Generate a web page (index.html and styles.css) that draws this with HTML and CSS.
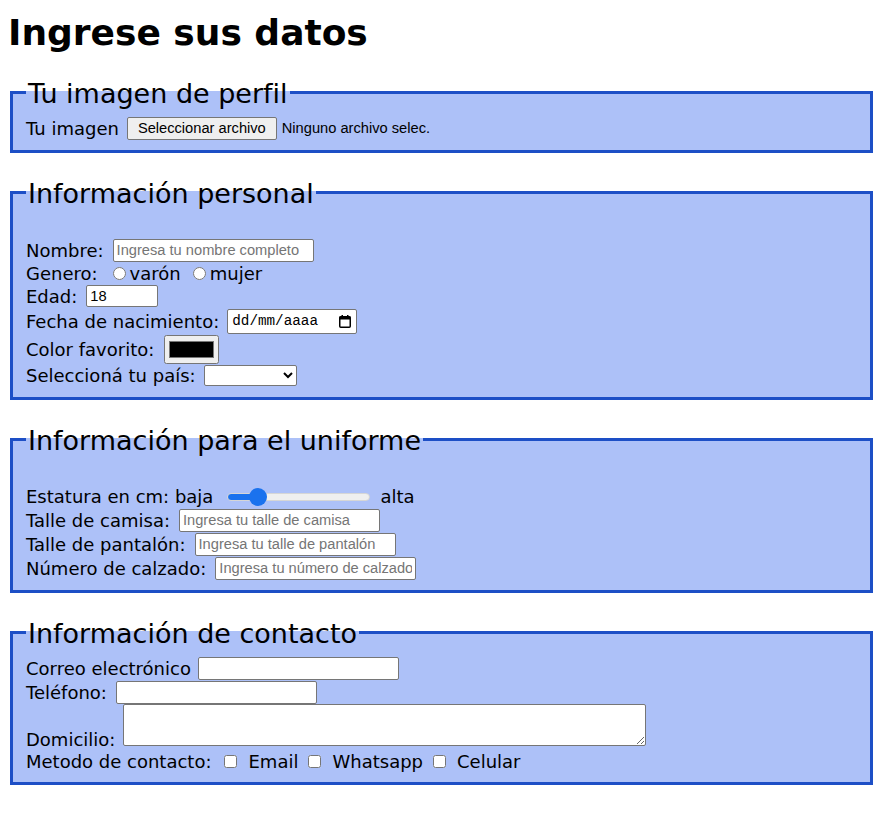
FILE: index.html
```html
<!DOCTYPE html>
<html lang="es">
<head>
<meta charset="utf-8">
<title>Ingrese sus datos</title>
<link rel="stylesheet" href="styles.css">
</head>
<body>
<h1 class="title">Ingrese sus datos</h1>
<form class="form">
  <fieldset class="group">
    <legend class="group-title">Tu imagen de perfil</legend>
    <div class="row">
      <span class="lbl">Tu imagen</span>
      <button type="button" class="file-btn gap-8">Seleccionar archivo</button>
      <span class="file-name">Ninguno archivo selec.</span>
    </div>
  </fieldset>

  <fieldset class="group">
    <legend class="group-title">Información personal</legend>
    <div class="group-body spaced">
      <div class="row">
        <label class="lbl" for="nombre">Nombre:</label>
        <input class="field gap-9" id="nombre" type="text" placeholder="Ingresa tu nombre completo">
      </div>
      <div class="row row--short">
        <span class="lbl">Genero:</span>
        <input class="radio radio--first" type="radio" name="genero" id="varon">
        <label class="opt" for="varon">varón</label>
        <input class="radio" type="radio" name="genero" id="mujer">
        <label class="opt" for="mujer">mujer</label>
      </div>
      <div class="row">
        <label class="lbl" for="edad">Edad:</label>
        <input class="field field--num gap-9" id="edad" type="number" value="18">
      </div>
      <div class="row row--date">
        <span class="lbl">Fecha de nacimiento:</span>
        <span class="date gap-8">
          <span class="date-text">dd/mm/aaaa</span>
          <svg class="date-icon" width="12" height="13" viewBox="0 0 12 13" aria-hidden="true">
            <rect x="0.75" y="1.75" width="10.5" height="10.5" rx="1" fill="none" stroke="#000" stroke-width="1.5"/>
            <rect x="0.5" y="1.5" width="11" height="3" fill="#000"/>
            <rect x="2.5" y="0" width="1.5" height="2" fill="#000"/>
            <rect x="8" y="0" width="1.5" height="2" fill="#000"/>
          </svg>
        </span>
      </div>
      <div class="row row--color">
        <label class="lbl" for="color">Color favorito:</label>
        <input class="color gap-10" id="color" type="color" value="#000000">
      </div>
      <div class="row row--select">
        <label class="lbl" for="pais">Seleccioná tu país:</label>
        <select class="select gap-8" id="pais"><option></option></select>
      </div>
    </div>
  </fieldset>

  <fieldset class="group">
    <legend class="group-title">Información para el uniforme</legend>
    <div class="group-body spaced">
      <div class="row row--range">
        <label class="lbl" for="estatura">Estatura en cm: baja</label>
        <input class="range" id="estatura" type="range" value="17">
        <span class="lbl">alta</span>
      </div>
      <div class="row">
        <label class="lbl" for="camisa">Talle de camisa:</label>
        <input class="field gap-9" id="camisa" type="text" placeholder="Ingresa tu talle de camisa">
      </div>
      <div class="row">
        <label class="lbl" for="pantalon">Talle de pantalón:</label>
        <input class="field gap-9" id="pantalon" type="text" placeholder="Ingresa tu talle de pantalón">
      </div>
      <div class="row">
        <label class="lbl" for="calzado">Número de calzado:</label>
        <input class="field gap-9" id="calzado" type="text" placeholder="Ingresa tu número de calzado">
      </div>
    </div>
  </fieldset>

  <fieldset class="group">
    <legend class="group-title">Información de contacto</legend>
    <div class="group-body">
      <div class="row">
        <label class="lbl" for="correo">Correo electrónico</label>
        <input class="field gap-7" id="correo" type="email">
      </div>
      <div class="row">
        <label class="lbl" for="tel">Teléfono:</label>
        <input class="field gap-9" id="tel" type="tel">
      </div>
      <div class="row row--area">
        <label class="lbl" for="domicilio">Domicilio:</label>
        <textarea class="area gap-8" id="domicilio"></textarea>
      </div>
      <div class="row row--short">
        <span class="lbl">Metodo de contacto:</span>
        <input class="check check--first" type="checkbox" id="m-email">
        <label class="opt" for="m-email">Email</label>
        <input class="check" type="checkbox" id="m-wa">
        <label class="opt" for="m-wa">Whatsapp</label>
        <input class="check" type="checkbox" id="m-cel">
        <label class="opt" for="m-cel">Celular</label>
      </div>
    </div>
  </fieldset>
</form>
</body>
</html>
```

FILE: styles.css
```css
html {
  background: #ffffff;
}

body {
  margin: 8px;
  font-family: "DejaVu Sans", Verdana, sans-serif;
  font-size: 18px;
  color: #000;
}

.title {
  margin: 0 0 18px;
  font-size: 36px;
  line-height: 49px;
  font-weight: bold;
}

.form {
  margin: 0;
}

.group {
  margin: 0 2px;
  padding: 6px 13px 10px;
  border: 3px solid #1d4fc6;
  background: #adc1f8;
  min-width: 0;
}

.group + .group {
  margin-top: 22px;
}

.group-title {
  font-size: 27px;
  line-height: 32px;
  padding: 3px 2px 0;
}

.group-body.spaced {
  padding-top: 22px;
}

.row {
  display: flex;
  align-items: center;
  height: 24px;
  white-space: nowrap;
}

.row--short { height: 22px; }
.row--date { height: 26px; }
.row--color { height: 30px; }
.row--select { height: 23px; }
.row--range { height: 23px; }
.row--area {
  height: 46px;
  align-items: flex-end;
}

.lbl,
.opt {
  line-height: normal;
}

.gap-5 { margin-left: 5px; }
.gap-6 { margin-left: 6px; }
.gap-7 { margin-left: 7px; }
.gap-8 { margin-left: 8px; }
.gap-9 { margin-left: 9px; }
.gap-10 { margin-left: 10px; }

/* fake file picker */
.file-btn {
  box-sizing: border-box;
  height: 23px;
  padding: 0 10px;
  border: 1px solid #767676;
  border-radius: 2px;
  background: #efefef;
  color: #000;
  font: 14.67px "Liberation Sans", Arial, sans-serif;
}

.file-name {
  margin-left: 5px;
  font: 14.67px "Liberation Sans", Arial, sans-serif;
}

/* text fields */
.field {
  box-sizing: border-box;
  width: 201px;
  height: 23px;
  margin-top: 0;
  margin-bottom: 0;
  padding: 1px 3px;
  border: 1px solid #767676;
  border-radius: 2px;
  background: #fff;
  font: 14.67px "Liberation Sans", Arial, sans-serif;
  color: #000;
}

.field::placeholder {
  color: #757575;
}

.field--num {
  width: 72px;
  height: 22px;
}

/* radios / checkboxes */
.radio {
  width: 13px;
  height: 13px;
  margin: 0 4px 0 12px;
}

.radio--first {
  margin-left: 15px;
}

.check {
  width: 13px;
  height: 13px;
  margin: 0 11px 0 10px;
}

.check--first {
  margin-left: 12px;
  margin-right: 12px;
}

/* fake date input */
.date {
  box-sizing: border-box;
  display: inline-flex;
  align-items: center;
  justify-content: space-between;
  width: 130px;
  height: 25px;
  padding: 0 5px 0 4px;
  border: 1px solid #767676;
  border-radius: 2px;
  background: #fff;
}

.date-text {
  font: 14.3px "Liberation Mono", "DejaVu Sans Mono", monospace;
}

.date-icon {
  display: block;
}

/* color */
.color {
  box-sizing: border-box;
  width: 55px;
  height: 29px;
  margin-top: 0;
  margin-bottom: 0;
}

/* select */
.select {
  box-sizing: border-box;
  width: 93px;
  height: 21px;
  margin-top: 0;
  margin-bottom: 0;
  border: 1px solid #767676;
  border-radius: 2px;
  background: #fff;
  font: 14.67px "Liberation Sans", Arial, sans-serif;
}

/* range */
.range {
  -webkit-appearance: none;
  appearance: none;
  width: 143px;
  height: 18px;
  margin: 0 10px 0 14px;
  padding: 0;
  background: transparent;
}

.range::-webkit-slider-runnable-track {
  box-sizing: border-box;
  height: 8px;
  border-radius: 4px;
  border: 1px solid #d6d6d6;
  background: linear-gradient(to right, #1a72ee 0, #1a72ee 32px, #efefef 32px);
}

.range::-webkit-slider-thumb {
  -webkit-appearance: none;
  appearance: none;
  width: 18px;
  height: 18px;
  margin-top: -6px;
  border: none;
  border-radius: 50%;
  background: #1a72ee;
}

/* textarea */
.area {
  box-sizing: border-box;
  width: 523px;
  height: 42px;
  margin-top: 0;
  margin-bottom: 4px;
  border: 1px solid #767676;
  border-radius: 2px;
  background: #fff;
}
```
